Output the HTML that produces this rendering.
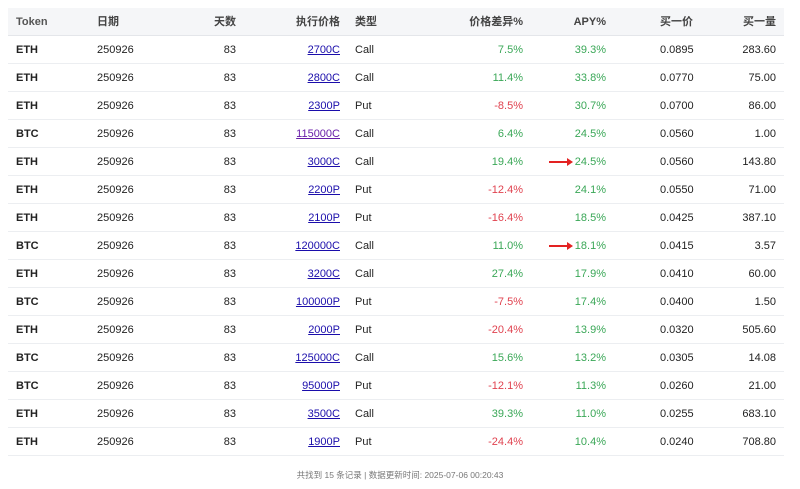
<!DOCTYPE html>
<html><head><meta charset="utf-8"><style>
body{margin:0;background:#fff;font-family:"Liberation Sans","Noto Sans CJK SC",sans-serif;font-size:11px;color:#222;width:800px;height:489px;overflow:hidden;position:relative}
.r{position:absolute;left:8px;width:776px;height:28px;border-bottom:1px solid #eceef1;box-sizing:border-box}
.h{background:#f5f6f8;color:#444;font-weight:bold;border-bottom:1px solid #e4e6ea}
.r span{position:absolute;top:0;line-height:28px;white-space:nowrap}
.a{left:8px;font-weight:bold}.h .a{color:#555}
.b{left:89px}
.c{right:548px;text-align:right}
.d{right:444px}
.d a{color:#1a0dab;text-decoration:underline}
.d a.v{color:#681da8}
.e{left:347px}
.f{right:261px}
.g{right:178px}
.i{left:652px}
.j{right:8px}
.gr{color:#3aa757}.rd{color:#e0424f}
.arr{position:absolute;top:13px;left:541px;width:22px;height:2px;background:#e32222}
.arr:after{content:"";position:absolute;right:-2px;top:-3px;border-left:6px solid #e32222;border-top:4px solid transparent;border-bottom:4px solid transparent}
.ft{position:absolute;top:469px;left:0;width:800px;text-align:center;font-size:8.5px;color:#777}
</style></head><body>
<div class="r h" style="top:8px"><span class="a">Token</span><span class="b">日期</span><span class="c">天数</span><span class="d" style="color:#444">执行价格</span><span class="e">类型</span><span class="f">价格差异%</span><span class="g">APY%</span><span class="i">买一价</span><span class="j">买一量</span></div>

<div class="r" style="top:36px"><span class="a">ETH</span><span class="b">250926</span><span class="c">83</span><span class="d"><a>2700C</a></span><span class="e">Call</span><span class="f gr">7.5%</span><span class="g gr">39.3%</span><span class="i">0.0895</span><span class="j">283.60</span></div>
<div class="r" style="top:64px"><span class="a">ETH</span><span class="b">250926</span><span class="c">83</span><span class="d"><a>2800C</a></span><span class="e">Call</span><span class="f gr">11.4%</span><span class="g gr">33.8%</span><span class="i">0.0770</span><span class="j">75.00</span></div>
<div class="r" style="top:92px"><span class="a">ETH</span><span class="b">250926</span><span class="c">83</span><span class="d"><a>2300P</a></span><span class="e">Put</span><span class="f rd">-8.5%</span><span class="g gr">30.7%</span><span class="i">0.0700</span><span class="j">86.00</span></div>
<div class="r" style="top:120px"><span class="a">BTC</span><span class="b">250926</span><span class="c">83</span><span class="d"><a class="v">115000C</a></span><span class="e">Call</span><span class="f gr">6.4%</span><span class="g gr">24.5%</span><span class="i">0.0560</span><span class="j">1.00</span></div>
<div class="r" style="top:148px"><span class="a">ETH</span><span class="b">250926</span><span class="c">83</span><span class="d"><a>3000C</a></span><span class="e">Call</span><span class="f gr">19.4%</span><div class="arr"></div><span class="g gr">24.5%</span><span class="i">0.0560</span><span class="j">143.80</span></div>
<div class="r" style="top:176px"><span class="a">ETH</span><span class="b">250926</span><span class="c">83</span><span class="d"><a>2200P</a></span><span class="e">Put</span><span class="f rd">-12.4%</span><span class="g gr">24.1%</span><span class="i">0.0550</span><span class="j">71.00</span></div>
<div class="r" style="top:204px"><span class="a">ETH</span><span class="b">250926</span><span class="c">83</span><span class="d"><a>2100P</a></span><span class="e">Put</span><span class="f rd">-16.4%</span><span class="g gr">18.5%</span><span class="i">0.0425</span><span class="j">387.10</span></div>
<div class="r" style="top:232px"><span class="a">BTC</span><span class="b">250926</span><span class="c">83</span><span class="d"><a>120000C</a></span><span class="e">Call</span><span class="f gr">11.0%</span><div class="arr"></div><span class="g gr">18.1%</span><span class="i">0.0415</span><span class="j">3.57</span></div>
<div class="r" style="top:260px"><span class="a">ETH</span><span class="b">250926</span><span class="c">83</span><span class="d"><a>3200C</a></span><span class="e">Call</span><span class="f gr">27.4%</span><span class="g gr">17.9%</span><span class="i">0.0410</span><span class="j">60.00</span></div>
<div class="r" style="top:288px"><span class="a">BTC</span><span class="b">250926</span><span class="c">83</span><span class="d"><a>100000P</a></span><span class="e">Put</span><span class="f rd">-7.5%</span><span class="g gr">17.4%</span><span class="i">0.0400</span><span class="j">1.50</span></div>
<div class="r" style="top:316px"><span class="a">ETH</span><span class="b">250926</span><span class="c">83</span><span class="d"><a>2000P</a></span><span class="e">Put</span><span class="f rd">-20.4%</span><span class="g gr">13.9%</span><span class="i">0.0320</span><span class="j">505.60</span></div>
<div class="r" style="top:344px"><span class="a">BTC</span><span class="b">250926</span><span class="c">83</span><span class="d"><a>125000C</a></span><span class="e">Call</span><span class="f gr">15.6%</span><span class="g gr">13.2%</span><span class="i">0.0305</span><span class="j">14.08</span></div>
<div class="r" style="top:372px"><span class="a">BTC</span><span class="b">250926</span><span class="c">83</span><span class="d"><a>95000P</a></span><span class="e">Put</span><span class="f rd">-12.1%</span><span class="g gr">11.3%</span><span class="i">0.0260</span><span class="j">21.00</span></div>
<div class="r" style="top:400px"><span class="a">ETH</span><span class="b">250926</span><span class="c">83</span><span class="d"><a>3500C</a></span><span class="e">Call</span><span class="f gr">39.3%</span><span class="g gr">11.0%</span><span class="i">0.0255</span><span class="j">683.10</span></div>
<div class="r" style="top:428px"><span class="a">ETH</span><span class="b">250926</span><span class="c">83</span><span class="d"><a>1900P</a></span><span class="e">Put</span><span class="f rd">-24.4%</span><span class="g gr">10.4%</span><span class="i">0.0240</span><span class="j">708.80</span></div>

<div class="ft">共找到 15 条记录 | 数据更新时间: 2025-07-06 00:20:43</div>
</body></html>
